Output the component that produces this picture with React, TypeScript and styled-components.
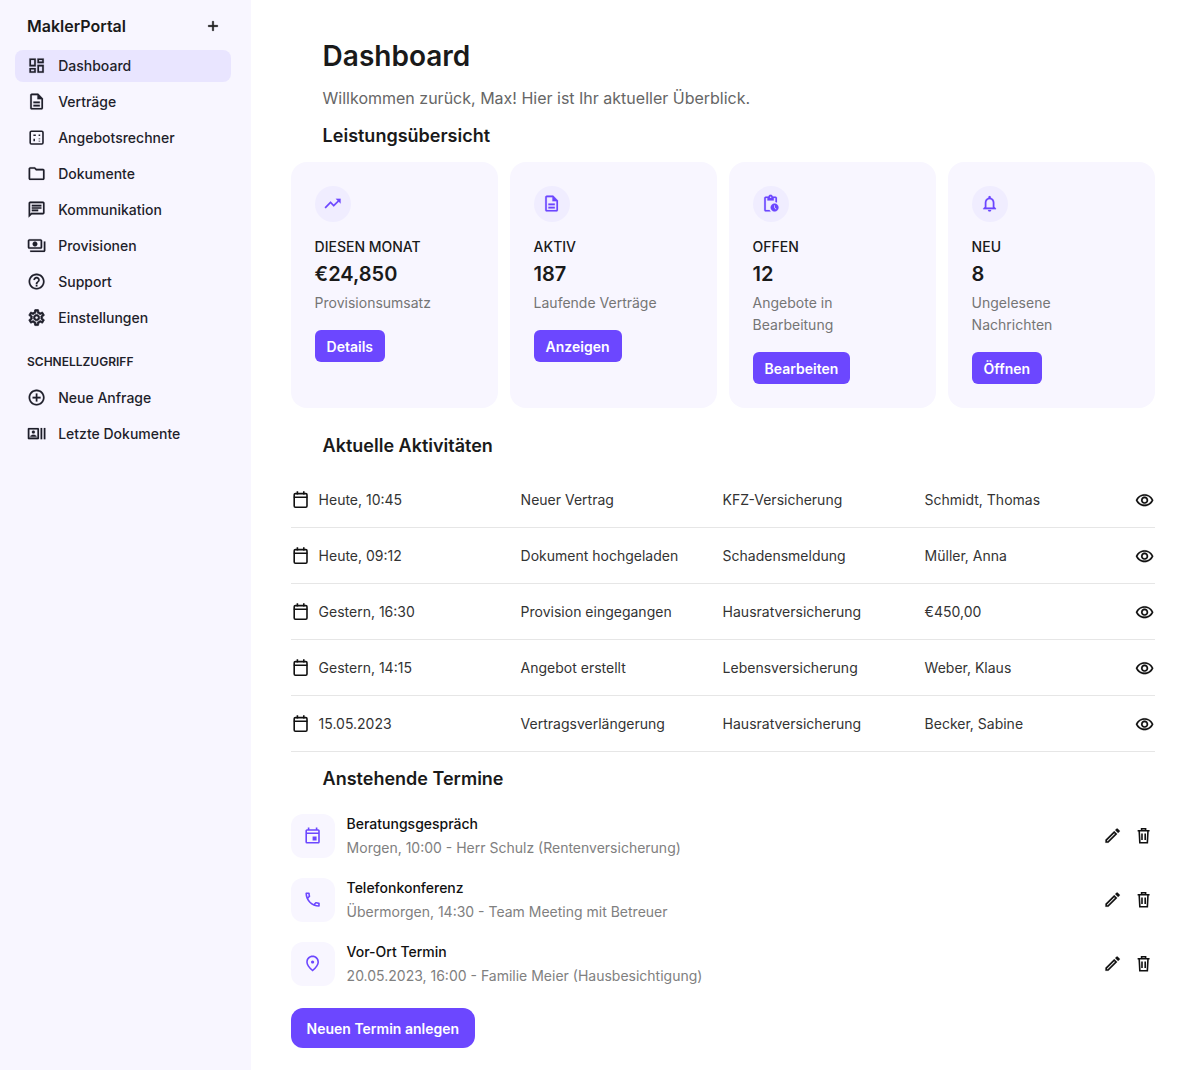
import React from 'react';
import styled, { createGlobalStyle, css } from 'styled-components';
import {
  MdAdd,
  MdOutlineAddCircleOutline,
  MdOutlineCall,
  MdOutlineChat,
  MdOutlineDashboard,
  MdOutlineDescription,
  MdOutlineEdit,
  MdOutlineEvent,
  MdOutlineFolder,
  MdOutlineHelpOutline,
  MdOutlineNotifications,
  MdOutlinePayments,
  MdOutlinePendingActions,
  MdOutlinePlace,
  MdOutlineRecentActors,
  MdOutlineSettings,
  MdOutlineVisibility,
  MdTrendingUp,
} from 'react-icons/md';

const GlobalStyle = createGlobalStyle`
  * { box-sizing: border-box; }
  body {
    margin: 0;
    background: #fff;
    font-family: Inter, "Liberation Sans", sans-serif;
    color: #1a1a1a;
  }
`;

// the dark icons are a little heavier than the stock outline set
const heavyIcon = css`
  svg {
    flex-shrink: 0;
  }
  svg[stroke-width='0'] {
    stroke-width: 0.2;
  }
  svg path[fill='none'] {
    stroke: none;
  }
`;

const Layout = styled.div`
  display: flex;
  min-height: 1070px;
`;

const Sidebar = styled.aside`
  width: 251px;
  flex-shrink: 0;
  background: #f8f6ff;
  padding: 16px 20px 16px 15px;
`;

const Brand = styled.div`
  display: flex;
  align-items: center;
  justify-content: space-between;
  height: 20px;
  margin-bottom: 14px;
  padding: 0 10px 0 12px;
  font-size: 16px;
  font-weight: 600;
  line-height: 20px;
  svg {
    stroke-width: 0.8;
  }
  svg path[fill='none'] {
    stroke: none;
  }
`;

const NavItem = styled.div<{ $active?: boolean }>`
  display: flex;
  align-items: center;
  gap: 12px;
  height: 32px;
  margin-bottom: 4px;
  padding: 0 12px;
  border-radius: 8px;
  background: ${(p) => (p.$active ? '#e9e5ff' : 'transparent')};
  font-size: 14px;
  line-height: 16px;
  font-weight: 500;
  color: #1f1f2b;
  ${heavyIcon}
`;

const GearIcon = styled(MdOutlineSettings)`
  &&& {
    stroke-width: 0.9;
  }
`;

const SideLabel = styled.div`
  margin: 20px 0 12px;
  padding-left: 12px;
  height: 16px;
  font-size: 12px;
  line-height: 16px;
  font-weight: 600;
  color: #1f1f2b;
`;

const Main = styled.main`
  flex: 1;
  min-width: 0;
  padding: 40px 23.4px 22px 39.6px;
`;

const Title = styled.h1`
  margin: 0 0 16px 32px;
  font-size: 28px;
  line-height: 32px;
  font-weight: 600;
  color: #1a1a1a;
`;

const Intro = styled.p`
  margin: 0 0 16px 32px;
  font-size: 16px;
  line-height: 20px;
  color: #666;
`;

const SectionTitle = styled.h2<{ $gap: number }>`
  margin: 0 0 ${(p) => p.$gap}px 32px;
  font-size: 18px;
  line-height: 24px;
  font-weight: 600;
  color: #1a1a1a;
`;

const Cards = styled.div`
  display: grid;
  grid-template-columns: repeat(4, 207px);
  gap: 12px;
  margin-bottom: 26px;
`;

const Card = styled.section`
  height: 246px;
  padding: 24px;
  border-radius: 16px;
  background: #f8f6ff;
`;

const CardIcon = styled.div`
  display: flex;
  align-items: center;
  justify-content: center;
  width: 36px;
  height: 36px;
  margin-bottom: 15px;
  border-radius: 50%;
  background: #f0edff;
  color: #6c47ff;
  font-size: 19.2px;
  ${heavyIcon}
`;

const CardLabel = styled.div`
  font-size: 14px;
  line-height: 20px;
  font-weight: 500;
  color: #1a1a1a;
`;

const CardValue = styled.div`
  margin-top: 5px;
  font-size: 20px;
  line-height: 24px;
  font-weight: 600;
  color: #1a1a1a;
`;

const CardText = styled.div`
  margin: 6px 0 16px;
  font-size: 14px;
  line-height: 22px;
  color: #757575;
`;

const SmallButton = styled.button`
  display: block;
  height: 32px;
  padding: 0 12px;
  border: 0;
  border-radius: 6px;
  background: #6c47ff;
  color: #fff;
  font-family: inherit;
  font-size: 14px;
  font-weight: 600;
`;

const ActivityList = styled.div`
  margin-bottom: 15px;
`;

const ActivityRow = styled.div`
  display: grid;
  grid-template-columns: 230px 202px 202px 1fr 19.2px;
  align-items: center;
  height: 56px;
  border-bottom: 1px solid #e6e6e6;
  font-size: 14px;
  line-height: 16px;
  color: #333;
`;

const DateCell = styled.div`
  display: flex;
  align-items: center;
  gap: 8.8px;
  font-size: 14px;
  svg {
    flex-shrink: 0;
    color: #111;
  }
`;

const IconCell = styled.div`
  display: flex;
  padding-top: 2px;
  color: #111;
  font-size: 19.2px;
  ${heavyIcon}
`;

const Appointments = styled.div`
  display: flex;
  flex-direction: column;
  gap: 20px;
  margin-bottom: 22px;
`;

const Appointment = styled.div`
  display: flex;
  align-items: center;
  height: 44px;
  gap: 12px;
`;

const AppointmentIcon = styled.div`
  display: flex;
  align-items: center;
  justify-content: center;
  flex-shrink: 0;
  width: 44px;
  height: 44px;
  border-radius: 12px;
  background: #f8f6ff;
  color: #6c47ff;
  font-size: 19.2px;
`;

const AppointmentBody = styled.div`
  flex: 1;
`;

const AppointmentTitle = styled.div`
  font-size: 14px;
  line-height: 20px;
  font-weight: 500;
  color: #111;
`;

const AppointmentText = styled.div`
  margin-top: 4px;
  font-size: 14px;
  line-height: 20px;
  color: #808080;
`;

const Actions = styled.div`
  display: flex;
  gap: 12px;
  padding-right: 1px;
  color: #111;
  font-size: 19.2px;
  ${heavyIcon}
`;

const PrimaryButton = styled.button`
  display: block;
  height: 40px;
  padding: 0 16px;
  border: 0;
  border-radius: 12px;
  background: #6c47ff;
  color: #fff;
  font-family: inherit;
  font-size: 14px;
  font-weight: 600;
`;

const CalendarIcon: React.FC = () => (
  <svg width="19.2" height="19.2" viewBox="0 0 24 24" fill="none" stroke="currentColor" strokeWidth="2">
    <rect x="4" y="4.5" width="16" height="17" rx="1.5" />
    <path d="M3.5 9h17M8 1.5v4M16 1.5v4" />
  </svg>
);

const TrashIcon: React.FC = () => (
  <svg width="19.2" height="19.2" viewBox="0 0 24 24" fill="none" stroke="currentColor" strokeWidth="2">
    <path d="M4.5 6h15M9.5 5.5V3.5h5v2M6.5 6l.8 15h9.4l.8-15M10 9.5v8M14 9.5v8" />
  </svg>
);

const CalculatorIcon: React.FC<{ size?: number }> = ({ size = 19.2 }) => (
  <svg width={size} height={size} viewBox="0 0 24 24" fill="none" stroke="currentColor" strokeWidth="2">
    <rect x="4" y="4" width="16" height="16" rx="1.5" />
    <path d="M8 9h3M14.5 9h2M9 13.5v3M15.5 13v1M15.5 16v1" />
  </svg>
);

const nav = [
  { label: 'Dashboard', Icon: MdOutlineDashboard, active: true },
  { label: 'Verträge', Icon: MdOutlineDescription },
  { label: 'Angebotsrechner', Icon: CalculatorIcon },
  { label: 'Dokumente', Icon: MdOutlineFolder },
  { label: 'Kommunikation', Icon: MdOutlineChat },
  { label: 'Provisionen', Icon: MdOutlinePayments },
  { label: 'Support', Icon: MdOutlineHelpOutline },
  { label: 'Einstellungen', Icon: GearIcon },
];

const quick = [
  { label: 'Neue Anfrage', Icon: MdOutlineAddCircleOutline },
  { label: 'Letzte Dokumente', Icon: MdOutlineRecentActors },
];

const cards = [
  { label: 'DIESEN MONAT', value: '€24,850', text: 'Provisionsumsatz', action: 'Details', Icon: MdTrendingUp },
  { label: 'AKTIV', value: '187', text: 'Laufende Verträge', action: 'Anzeigen', Icon: MdOutlineDescription },
  { label: 'OFFEN', value: '12', text: 'Angebote in Bearbeitung', action: 'Bearbeiten', Icon: MdOutlinePendingActions },
  { label: 'NEU', value: '8', text: 'Ungelesene Nachrichten', action: 'Öffnen', Icon: MdOutlineNotifications },
];

const activities = [
  ['Heute, 10:45', 'Neuer Vertrag', 'KFZ-Versicherung', 'Schmidt, Thomas'],
  ['Heute, 09:12', 'Dokument hochgeladen', 'Schadensmeldung', 'Müller, Anna'],
  ['Gestern, 16:30', 'Provision eingegangen', 'Hausratversicherung', '€450,00'],
  ['Gestern, 14:15', 'Angebot erstellt', 'Lebensversicherung', 'Weber, Klaus'],
  ['15.05.2023', 'Vertragsverlängerung', 'Hausratversicherung', 'Becker, Sabine'],
];

const appointments = [
  { title: 'Beratungsgespräch', text: 'Morgen, 10:00 - Herr Schulz (Rentenversicherung)', Icon: MdOutlineEvent },
  { title: 'Telefonkonferenz', text: 'Übermorgen, 14:30 - Team Meeting mit Betreuer', Icon: MdOutlineCall },
  { title: 'Vor-Ort Termin', text: '20.05.2023, 16:00 - Familie Meier (Hausbesichtigung)', Icon: MdOutlinePlace },
];

const App: React.FC = () => (
  <Layout>
    <GlobalStyle />
    <Sidebar>
      <Brand>
        MaklerPortal
        <MdAdd size={16} />
      </Brand>
      {nav.map(({ label, Icon, active }) => (
        <NavItem key={label} $active={active}>
          <Icon size={19.2} />
          {label}
        </NavItem>
      ))}
      <SideLabel>SCHNELLZUGRIFF</SideLabel>
      {quick.map(({ label, Icon }) => (
        <NavItem key={label}>
          <Icon size={19.2} />
          {label}
        </NavItem>
      ))}
    </Sidebar>
    <Main>
      <Title>Dashboard</Title>
      <Intro>Willkommen zurück, Max! Hier ist Ihr aktueller Überblick.</Intro>
      <SectionTitle $gap={14}>Leistungsübersicht</SectionTitle>
      <Cards>
        {cards.map(({ label, value, text, action, Icon }) => (
          <Card key={label}>
            <CardIcon>
              <Icon />
            </CardIcon>
            <CardLabel>{label}</CardLabel>
            <CardValue>{value}</CardValue>
            <CardText>{text}</CardText>
            <SmallButton>{action}</SmallButton>
          </Card>
        ))}
      </Cards>
      <SectionTitle $gap={14}>Aktuelle Aktivitäten</SectionTitle>
      <ActivityList>
        {activities.map(([date, what, area, who]) => (
          <ActivityRow key={date}>
            <DateCell>
              <CalendarIcon />
              {date}
            </DateCell>
            <div>{what}</div>
            <div>{area}</div>
            <div>{who}</div>
            <IconCell>
              <MdOutlineVisibility />
            </IconCell>
          </ActivityRow>
        ))}
      </ActivityList>
      <SectionTitle $gap={23}>Anstehende Termine</SectionTitle>
      <Appointments>
        {appointments.map(({ title, text, Icon }) => (
          <Appointment key={title}>
            <AppointmentIcon>
              <Icon />
            </AppointmentIcon>
            <AppointmentBody>
              <AppointmentTitle>{title}</AppointmentTitle>
              <AppointmentText>{text}</AppointmentText>
            </AppointmentBody>
            <Actions>
              <MdOutlineEdit />
              <TrashIcon />
            </Actions>
          </Appointment>
        ))}
      </Appointments>
      <PrimaryButton>Neuen Termin anlegen</PrimaryButton>
    </Main>
  </Layout>
);

export default App;
